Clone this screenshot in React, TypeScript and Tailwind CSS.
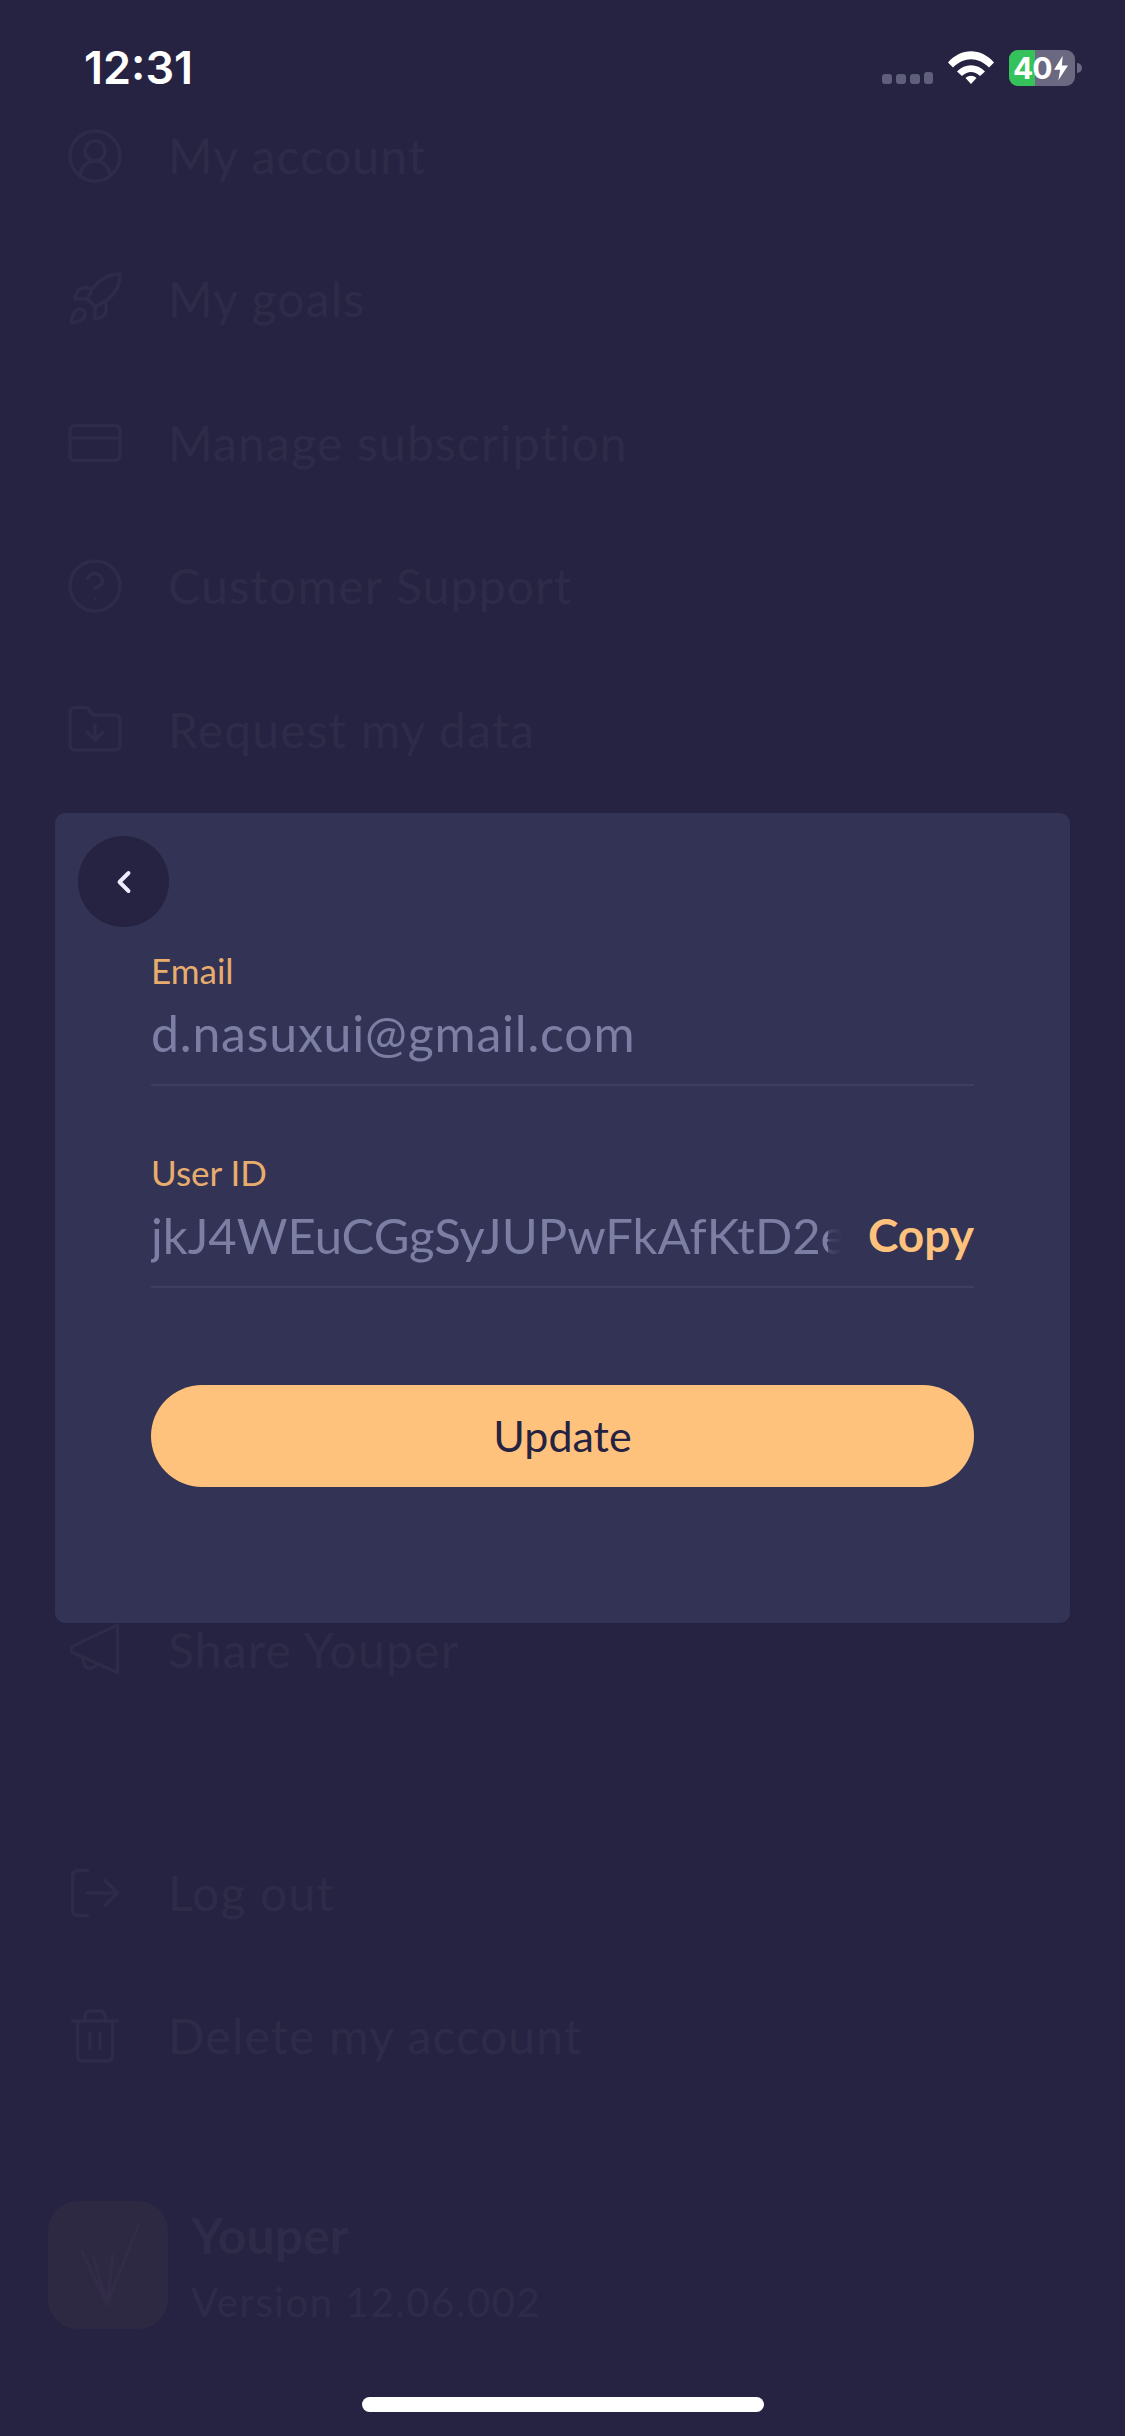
import { ChevronLeft, CircleHelp, CircleUserRound, CreditCard, FolderDown, LogOut, Rocket, Trash2 } from 'lucide-react';
import type { LucideIcon } from 'lucide-react';

const topRows: { icon: LucideIcon; label: string }[] = [
    { icon: CircleUserRound, label: 'My account' },
    { icon: Rocket, label: 'My goals' },
    { icon: CreditCard, label: 'Manage subscription' },
    { icon: CircleHelp, label: 'Customer Support' },
    { icon: FolderDown, label: 'Request my data' }
];

// Share icon is a plain left-pointing horn, lucide's Megaphone has too much detail
function ShareIcon({ size, strokeWidth, className }: { size?: number; strokeWidth?: number; className?: string }) {
    return (
        <svg width={size} height={size} viewBox="0 0 24 24" fill="none" stroke="currentColor" strokeWidth={strokeWidth} strokeLinejoin="round" className={className}>
            <path d="M21 2 L3 10.5 Q2 12 3 13 L21 21 Z" />
            <path d="M7 15 L8 18.5 Q9.5 20 12 18.6 L13 17.8" />
        </svg>
    );
}

function MenuRow({ icon: Icon, label }: { icon: LucideIcon | typeof ShareIcon; label: string }) {
    return (
        <div className="flex h-[143.5px] items-center">
            <div className="flex w-[60px] justify-center">
                <Icon size={68} strokeWidth={1.4} className="text-[#2d2b48]" />
            </div>
            <span className="ml-[43px] text-[48px] tracking-[1.2px] text-[#2d2b48]">{label}</span>
        </div>
    );
}

function StatusBar() {
    return (
        <div className="flex h-[84px] items-start justify-between pl-[84px] pr-[43px] pt-[43px]">
            <span className="font-['Inter',sans-serif] text-[45px] leading-[50px] font-semibold text-white">12:31</span>
            <div className="flex items-start pt-[8px]">
                <div className="mt-[23px] flex gap-[4px]">
                    <div className="h-[10px] w-[10px] rounded-[3px] bg-[#5f5e7b]" />
                    <div className="h-[10px] w-[10px] rounded-[3px] bg-[#5f5e7b]" />
                    <div className="h-[10px] w-[10px] rounded-[3px] bg-[#5f5e7b]" />
                    <div className="-mt-[2px] h-[12px] w-[9px] rounded-[3px] bg-[#5f5e7b]" />
                </div>
                <svg width="46" height="33" viewBox="0 0 46 33" className="ml-[15px]">
                    <path d="M0 11.5 C13 -3.5 33 -3.5 46 11.5 L41 16.5 C30 5.5 16 5.5 5 16.5 Z" fill="#fff" />
                    <path d="M9 20.5 C17 12 29 12 37 20.5 L32 25 C26 19.5 20 19.5 14 25 Z" fill="#fff" />
                    <path d="M17.5 27 C21 24 25 24 28.5 27 L23 33 Z" fill="#fff" />
                </svg>
                <div className="relative ml-[15px] -mt-[1px] flex h-[36px] w-[66px] items-center rounded-[9px] bg-[#6a6981]">
                    <div className="absolute inset-y-0 left-0 w-[26px] rounded-l-[9px] bg-[#35c25a]" />
                    <span className="relative ml-[4px] font-['Inter',sans-serif] text-[30px] leading-none font-bold tracking-[-1px] text-white">40</span>
                    <svg width="14" height="28" viewBox="0 0 16 28" className="relative ml-[2px] shrink-0">
                        <path d="M10 0 L0 16 H7 L5 28 L16 11 H9 Z" fill="#fff" />
                    </svg>
                </div>
                <div className="ml-[2px] mt-[12px] h-[10px] w-[5px] rounded-r-full bg-[#6a6981]" />
            </div>
        </div>
    );
}

export default function App() {
    return (
        <div className="relative h-[2436px] w-[1125px] overflow-hidden bg-[#252341] font-['Lato',sans-serif]">
            <StatusBar />

            {/* Dimmed settings list behind the sheet */}
            <div className="pl-[65px]">
                {topRows.map((row) => (
                    <MenuRow key={row.label} icon={row.icon} label={row.label} />
                ))}
                <div className="mt-[777px]">
                    <MenuRow icon={ShareIcon} label="Share Youper" />
                </div>
                <div className="mt-[99px]">
                    <MenuRow icon={LogOut} label="Log out" />
                    <MenuRow icon={Trash2} label="Delete my account" />
                </div>
            </div>

            <div className="mt-[93px] flex items-center pl-[48px]">
                <div className="flex h-[128px] w-[120px] items-center justify-center rounded-[30px] bg-[#2e2943]">
                    <svg width="70" height="90" viewBox="0 0 70 90" fill="none" stroke="#332c48" strokeWidth="3">
                        <path d="M8 30 L34 84 L66 4 M34 84 L40 34 M34 84 L20 36" />
                    </svg>
                </div>
                <div className="ml-[23px] flex flex-col">
                    <span className="text-[50px] leading-[60px] font-bold text-[#2d2b48]">Youper</span>
                    <span className="mt-[14px] text-[40px] leading-[46px] tracking-[1.6px] text-[#2d2b48]">Version 12.06.002</span>
                </div>
            </div>

            {/* Sheet */}
            <div className="absolute left-[55px] top-[813px] h-[810px] w-[1015px] rounded-[10px] bg-[#323355] pl-[23px] pt-[23px]">
                <div className="flex h-[91px] w-[91px] items-center justify-center rounded-full bg-[#252341]">
                    <ChevronLeft size={36} strokeWidth={2.6} className="text-[#ecebff]" />
                </div>

                <div className="w-[823px] pl-[73px]">
                    <div className="w-[823px]">
                        <div className="mt-[22px] text-[35px] leading-[42px] text-[#e8ad6c]">Email</div>
                        <div className="mt-[11px] flex h-[84px] items-start border-b-2 border-[#3d3e62] text-[50px] leading-[62px] tracking-[0.8px] text-[#7c7ea3]">
                            d.nasuxui@gmail.com
                        </div>

                        <div className="mt-[65px] text-[35px] leading-[42px] text-[#e8ad6c]">User ID</div>
                        <div className="mt-[11px] flex h-[84px] items-start border-b-2 border-[#3d3e62]">
                            <div className="relative mr-[26px] min-w-0 flex-1 overflow-hidden whitespace-nowrap text-[49px] leading-[62px] text-[#7c7ea3]">
                                jkJ4WEuCGgSyJUPwFkAfKtD2e8kQ
                                <div className="absolute inset-y-0 right-0 w-[14px] bg-gradient-to-r from-[#323355]/70 to-[#323355]" />
                            </div>
                            <span className="shrink-0 text-[46px] leading-[62px] font-bold text-[#ffc27d]">Copy</span>
                        </div>

                        <button className="mt-[97px] flex h-[102px] w-full items-center justify-center rounded-full bg-[#ffc27d] text-[43px] text-[#252341]">
                            Update
                        </button>
                    </div>
                </div>
            </div>

            <div className="absolute left-[362px] top-[2397px] h-[15px] w-[402px] rounded-full bg-white" />
        </div>
    );
}
